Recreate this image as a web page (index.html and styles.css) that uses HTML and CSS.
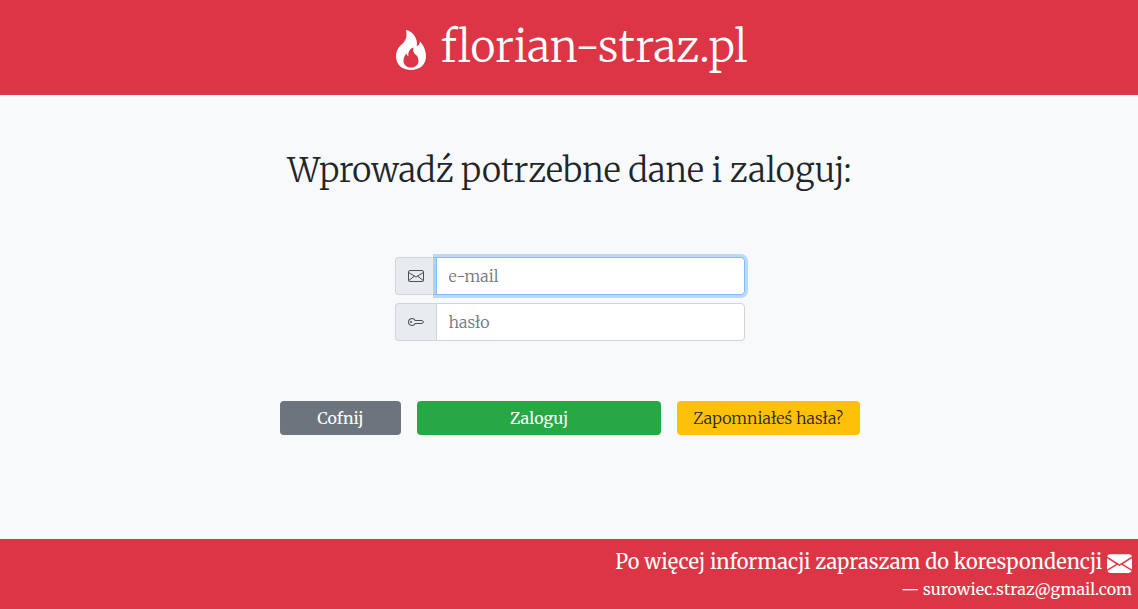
FILE: index.html
```html
<!DOCTYPE html>
<html lang="pl">
<head>
<meta charset="utf-8">
<meta name="viewport" content="width=device-width, initial-scale=1">
<title>florian-straz.pl</title>
<link rel="stylesheet" href="styles.css">
</head>
<body>
<header class="site-header">
  <svg class="flame" viewBox="0 0 16 16" fill="currentColor" aria-hidden="true"><path fill-rule="evenodd" d="M8 16c3.314 0 6-2 6-5.5 0-1.5-.5-4-2.5-6 .25 1.5-1.25 2-1.25 2C11 4 9 .5 6 0c.357 2 .5 4-2 6-1.25 1-2 2.729-2 4.5C2 14 4.686 16 8 16zm0-1c-1.657 0-3-1-3-2.75 0-.75.25-2 1.25-3C6.125 10 7 10.5 7 10.5c-.375-1.25.5-3.25 2-3.5-.179 1-.25 2 1 3 .625.5 1 1.364 1 2.25C11 14 9.657 15 8 15z"/></svg>
  <h1 class="site-name">florian-straz.pl</h1>
</header>
<main class="content">
  <h2 class="title">Wprowadź potrzebne dane i zaloguj:</h2>
  <form class="login">
    <div class="fields">
      <div class="field">
        <label class="addon" for="email" aria-label="e-mail">
          <svg class="icon" viewBox="0 0 16 16" fill="none" stroke="currentColor" aria-hidden="true"><rect x=".5" y="2.5" width="15" height="11" rx="1.5"/><path d="M.5 4.5 8 9l7.500-4.500M.5 12.700 6.500 8M15.500 12.700 9.500 8"/></svg>
        </label>
        <input class="input input-active" id="email" type="email" placeholder="e-mail" autofocus>
      </div>
      <div class="field">
        <label class="addon" for="password" aria-label="hasło">
          <svg class="icon" viewBox="0 0 16 16" fill="currentColor" aria-hidden="true"><path d="M0 8a4 4 0 0 1 7.465-2H14a.5.5 0 0 1 .354.146l1.500 1.500a.5.5 0 0 1 0 .708l-1.500 1.500A.5.5 0 0 1 14 10H7.465A4 4 0 0 1 0 8zm4-3a3 3 0 1 0 2.712 4.285A.5.5 0 0 1 7.163 9H14l1-1-1-1H7.163a.5.5 0 0 1-.45-.285A3 3 0 0 0 4 5z"/><circle cx="3" cy="8" r="1"/></svg>
        </label>
        <input class="input" id="password" type="password" placeholder="hasło">
      </div>
    </div>
    <div class="actions">
      <button class="btn btn-back" type="button">Cofnij</button>
      <button class="btn btn-login" type="submit">Zaloguj</button>
      <button class="btn btn-forgot" type="button">Zapomniałeś hasła?</button>
    </div>
  </form>
</main>
<footer class="site-footer">
  <p class="contact">Po więcej informacji zapraszam do korespondencji
    <svg class="mail" viewBox="0 0 16 12" fill="currentColor" aria-hidden="true"><path d="M.05 1.555A2 2 0 0 1 2 0h12a2 2 0 0 1 1.950 1.555L8 6.414.05 1.555zM0 2.697v7.104l5.803-3.558L0 2.697zM6.761 6.829l-6.570 4.027A2 2 0 0 0 2 12h12a2 2 0 0 0 1.808-1.144l-6.570-4.027L8 7.586l-1.239-.757zM10.197 6.243 16 9.801V2.697l-5.803 3.546z"/></svg>
  </p>
  <p class="address">— surowiec.straz@gmail.com</p>
</footer>
</body>
</html>
```
FILE: styles.css
```css
* { box-sizing: border-box; }

body {
  margin: 0;
  min-height: 100vh;
  display: flex;
  flex-direction: column;
  background: #f8f9fa;
  color: #212529;
  font-family: Merriweather, "DejaVu Serif Condensed", "DejaVu Serif", serif;
  font-optical-sizing: none;
  font-size: 16px;
  font-weight: 300;
  line-height: 24px;
}

h1, h2, p { margin: 0; font-weight: 300; }

.site-header {
  display: flex;
  justify-content: center;
  align-items: center;
  gap: 10px;
  padding: 17px 6px 18px;
  background: #dc3545;
  color: #fff;
}

.flame { width: 40px; height: 40px; margin-top: 6px; }
.site-name { font-size: 43px; line-height: 60px; }

.content {
  flex: 1;
  display: flex;
  flex-direction: column;
  align-items: center;
  padding: 56px 15px 40px 16px;
}

.title { font-size: 33px; line-height: 40px; text-align: center; }

.login {
  display: flex;
  flex-direction: column;
  align-items: center;
  gap: 60px;
  width: 100%;
  max-width: 580px;
  margin-top: 66px;
}

.fields {
  display: grid;
  gap: 8px;
  width: 100%;
  max-width: 350px;
}

.field { display: flex; }

.addon {
  display: flex;
  align-items: center;
  padding: 0 12px;
  border: 1px solid #ced4da;
  border-right: 0;
  border-radius: 4px 0 0 4px;
  background: #e9ecef;
  color: #495057;
}

.icon { width: 16px; height: 16px; }

.input {
  flex: 1;
  min-width: 0;
  height: 38px;
  padding: 6px 12px;
  border: 1px solid #ced4da;
  border-radius: 0 4px 4px 0;
  background: #fff;
  color: #495057;
  font: inherit;
  font-optical-sizing: none;
  outline: 0;
}

.input::placeholder { color: #6c757d; opacity: 1; }

.input-active {
  border-color: #80bdff;
  box-shadow: 0 0 0 3px rgba(0, 123, 255, .25);
}

.actions {
  display: grid;
  grid-template-columns: 2fr 4fr 3fr;
  gap: 16px;
  width: 100%;
}

.btn {
  height: 34px;
  padding: 0 8px;
  border: 0;
  border-radius: 4px;
  color: #fff;
  font: inherit;
  font-optical-sizing: none;
  font-weight: 400;
  white-space: nowrap;
}

.btn-back { background: #6c757d; }
.btn-login { background: #28a745; }
.btn-forgot { background: #ffc107; color: #212529; font-weight: 300; }

.site-footer {
  padding: 7px 6px 8px;
  background: #dc3545;
  color: #fff;
  text-align: right;
}

.contact { font-size: 20px; font-weight: 400; line-height: 31px; }
.mail { width: 25px; height: 19px; vertical-align: -4px; }
.address { font-size: 16px; font-weight: 400; line-height: 24px; }
```
